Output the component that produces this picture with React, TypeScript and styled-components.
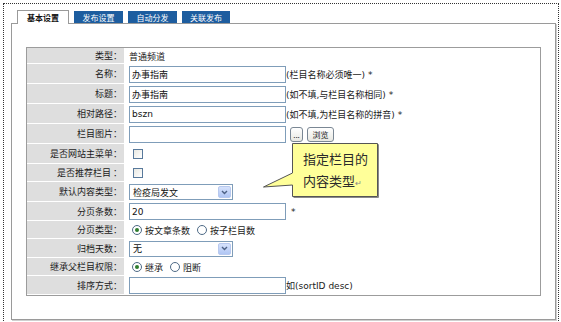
import React from 'react';
import styled, { createGlobalStyle } from 'styled-components';

const GlobalStyle = createGlobalStyle`
  html, body {
    margin: 0;
    padding: 0;
    background: #fff;
  }
  body {
    font-family: "DejaVu Sans", "Noto Sans CJK SC", sans-serif;
    font-size: 9px;
    color: #222;
  }
`;

const Page = styled.div`
  position: relative;
  width: 561px;
  height: 322px;
  overflow: hidden;
`;

const Frame = styled.div`
  margin: 3px 0 0 3px;
  width: 556px;
  height: 340px;
  box-sizing: border-box;
  border: 1px dotted #333;
  padding: 6px 0 0 7px;
`;

const Tabs = styled.div`
  display: flex;
  align-items: flex-end;
  height: 13px;
  margin-left: 6px;
  gap: 5px;
`;

const Tab = styled.div<{ $active?: boolean; $w: number }>`
  width: ${p => p.$w}px;
  box-sizing: border-box;
  display: flex;
  align-items: center;
  justify-content: center;
  font-family: "Noto Sans CJK SC", sans-serif;
  font-size: 8px;
  position: relative;
  z-index: 1;
  ${p =>
    p.$active
      ? `
    height: 14px;
    margin-bottom: -1px;
    background: #fff;
    border: 1px solid #9a9a9a;
    border-bottom: none;
    color: #111;
    font-weight: 700;
  `
      : `
    height: 12px;
    background: #1d5d9f;
    color: #fff;
  `}
`;

const Panel = styled.div`
  width: 545px;
  height: 297px;
  box-sizing: border-box;
  border: 1px solid #9a9a9a;
  box-shadow: 1px 1px 0 #cfcfcf;
  padding: 23px 14px 0 14px;
`;

const Form = styled.div`
  width: 515px;
  box-sizing: border-box;
  border: 1px solid #9c9c9c;
  display: flex;
  flex-direction: column;
`;

const Row = styled.div<{ $h: number }>`
  display: flex;
  height: ${p => p.$h}px;
`;

const Label = styled.div`
  width: 98px;
  flex: none;
  box-sizing: border-box;
  background: #dedede;
  border-bottom: 1px solid #fff;
  border-right: 1px solid #fff;
  display: flex;
  align-items: center;
  justify-content: flex-end;
  padding-right: 2px;
  font-family: "Noto Sans CJK SC", sans-serif;
  color: #1a1a1a;
`;

const Value = styled.div`
  flex: 1;
  display: flex;
  align-items: center;
  padding-left: 4px;
  font-family: "Noto Sans CJK SC", sans-serif;
  color: #1a1a1a;
`;

const TextInput = styled.div`
  width: 157px;
  height: 17px;
  box-sizing: border-box;
  border: 1px solid #7f9db9;
  background: #fff;
  padding: 0 2px;
  display: flex;
  align-items: center;
  font-family: "DejaVu Sans", "Noto Sans CJK SC", sans-serif;
  font-size: 9px;
  color: #111;
`;

const Note = styled.span<{ $gap?: number }>`
  margin-left: ${p => p.$gap ?? 0}px;
  font-family: "DejaVu Sans", "Noto Sans CJK SC", sans-serif;
  font-size: 9px;
  color: #1a1a1a;
  white-space: nowrap;
`;

const Button = styled.div<{ $w: number }>`
  width: ${p => p.$w}px;
  height: 15px;
  margin-left: 4px;
  box-sizing: border-box;
  border: 1px solid #7a8794;
  border-radius: 3px;
  background: linear-gradient(#ffffff, #e8e8e2);
  display: flex;
  align-items: center;
  justify-content: center;
  font-family: "Noto Sans CJK SC", sans-serif;
  font-size: 8px;
  color: #222;
`;

const Check = styled.span`
  width: 10px;
  height: 10px;
  margin-left: 4px;
  box-sizing: border-box;
  border: 1px solid #58799b;
  background: linear-gradient(135deg, #e8e8e2, #fff);
`;

const Select = styled.div`
  width: 104px;
  height: 16px;
  box-sizing: border-box;
  border: 1px solid #7f9db9;
  background: #fff;
  display: flex;
  align-items: center;
  padding-left: 3px;
  font-size: 9px;
  color: #111;
  position: relative;
`;

const SelectArrow = styled.span`
  position: absolute;
  right: 1px;
  top: 1px;
  width: 13px;
  height: 12px;
  border-radius: 2px;
  background: linear-gradient(#d6e2fc, #b0c6f4);
  border: 1px solid #b8c9ef;
  box-sizing: border-box;
  display: flex;
  align-items: center;
  justify-content: center;
`;

const RadioGroup = styled.div`
  display: flex;
  align-items: center;
  gap: 3px;
  margin-left: 3px;
`;

const RadioDot = styled.span<{ $on?: boolean }>`
  width: 10px;
  height: 10px;
  box-sizing: border-box;
  border-radius: 50%;
  border: 1px solid #4e6a86;
  background: #fff;
  display: flex;
  align-items: center;
  justify-content: center;
  margin-left: ${p => (p.$on ? 0 : 4)}px;

  &::after {
    content: '';
    width: 4px;
    height: 4px;
    border-radius: 50%;
    background: ${p => (p.$on ? '#2f7d2f' : 'transparent')};
  }
`;

const Callout = styled.div`
  position: absolute;
  left: 262px;
  top: 142px;
  width: 118px;
  height: 57px;
`;

const CalloutText = styled.div`
  position: absolute;
  left: 41px;
  top: 6px;
  font-family: "Noto Sans CJK SC", sans-serif;
  font-size: 13px;
  line-height: 22px;
  color: #2a2a2a;
  white-space: nowrap;

  .ret {
    font-size: 8px;
    color: #888;
  }
`;

const Radio: React.FC<{ on?: boolean; label: string }> = ({ on, label }) => (
  <>
    <RadioDot $on={on} />
    <span>{label}</span>
  </>
);

const Arrow = () => (
  <svg width="7" height="5" viewBox="0 0 7 5">
    <path d="M1 1 L3.5 3.5 L6 1" fill="none" stroke="#4d6185" strokeWidth="1.4" />
  </svg>
);

const App: React.FC = () => {
  const tabs = [
    { name: '基本设置', w: 52, active: true },
    { name: '发布设置', w: 49 },
    { name: '自动分发', w: 49 },
    { name: '关联发布', w: 48 },
  ];

  return (
    <Page>
      <GlobalStyle />
      <Frame>
        <Tabs>
          {tabs.map(t => (
            <Tab key={t.name} $w={t.w} $active={t.active}>
              {t.name}
            </Tab>
          ))}
        </Tabs>
        <Panel>
          <Form>
            <Row $h={16}>
              <Label>类型：</Label>
              <Value>普通频道</Value>
            </Row>
            <Row $h={20}>
              <Label>名称：</Label>
              <Value>
                <TextInput>办事指南</TextInput>
                <Note>(栏目名称必须唯一) *</Note>
              </Value>
            </Row>
            <Row $h={20}>
              <Label>标题：</Label>
              <Value>
                <TextInput>办事指南</TextInput>
                <Note>(如不填,与栏目名称相同) *</Note>
              </Value>
            </Row>
            <Row $h={20}>
              <Label>相对路径：</Label>
              <Value>
                <TextInput>bszn</TextInput>
                <Note>(如不填,为栏目名称的拼音) *</Note>
              </Value>
            </Row>
            <Row $h={20}>
              <Label>栏目图片：</Label>
              <Value>
                <TextInput />
                <Button $w={13}>...</Button>
                <Button $w={27}>浏览</Button>
              </Value>
            </Row>
            <Row $h={20}>
              <Label>是否网站主菜单：</Label>
              <Value>
                <Check />
              </Value>
            </Row>
            <Row $h={18}>
              <Label>是否推荐栏目 ：</Label>
              <Value>
                <Check />
              </Value>
            </Row>
            <Row $h={20}>
              <Label>默认内容类型：</Label>
              <Value>
                <Select>
                  检疫局发文
                  <SelectArrow>
                    <Arrow />
                  </SelectArrow>
                </Select>
              </Value>
            </Row>
            <Row $h={19}>
              <Label>分页条数：</Label>
              <Value>
                <TextInput>20</TextInput>
                <Note $gap={5}>*</Note>
              </Value>
            </Row>
            <Row $h={18}>
              <Label>分页类型：</Label>
              <Value>
                <RadioGroup>
                  <Radio on label="按文章条数" />
                  <Radio label="按子栏目数" />
                </RadioGroup>
              </Value>
            </Row>
            <Row $h={19}>
              <Label>归档天数：</Label>
              <Value>
                <Select>
                  无
                  <SelectArrow>
                    <Arrow />
                  </SelectArrow>
                </Select>
              </Value>
            </Row>
            <Row $h={18}>
              <Label>继承父栏目权限：</Label>
              <Value>
                <RadioGroup>
                  <Radio on label="继承" />
                  <Radio label="阻断" />
                </RadioGroup>
              </Value>
            </Row>
            <Row $h={19}>
              <Label>排序方式：</Label>
              <Value>
                <TextInput />
                <Note>如(sortID desc)</Note>
              </Value>
            </Row>
          </Form>
        </Panel>
      </Frame>

      <Callout>
        <svg width="118" height="57" viewBox="0 0 118 57">
          <path d="M31.5 2.5 H116.5 V55.5 H31.5" fill="none" stroke="#8a8a8a" strokeWidth="1" />
          <path
            d="M30.5 1.5 H115.5 V54.5 H30.5 V43 L1.5 45 L30.5 31 Z"
            fill="#ffff99"
            stroke="#555"
            strokeWidth="1"
          />
        </svg>
        <CalloutText>
          指定栏目的
          <br />
          内容类型<span className="ret">↵</span>
        </CalloutText>
      </Callout>
    </Page>
  );
};

export default App;
